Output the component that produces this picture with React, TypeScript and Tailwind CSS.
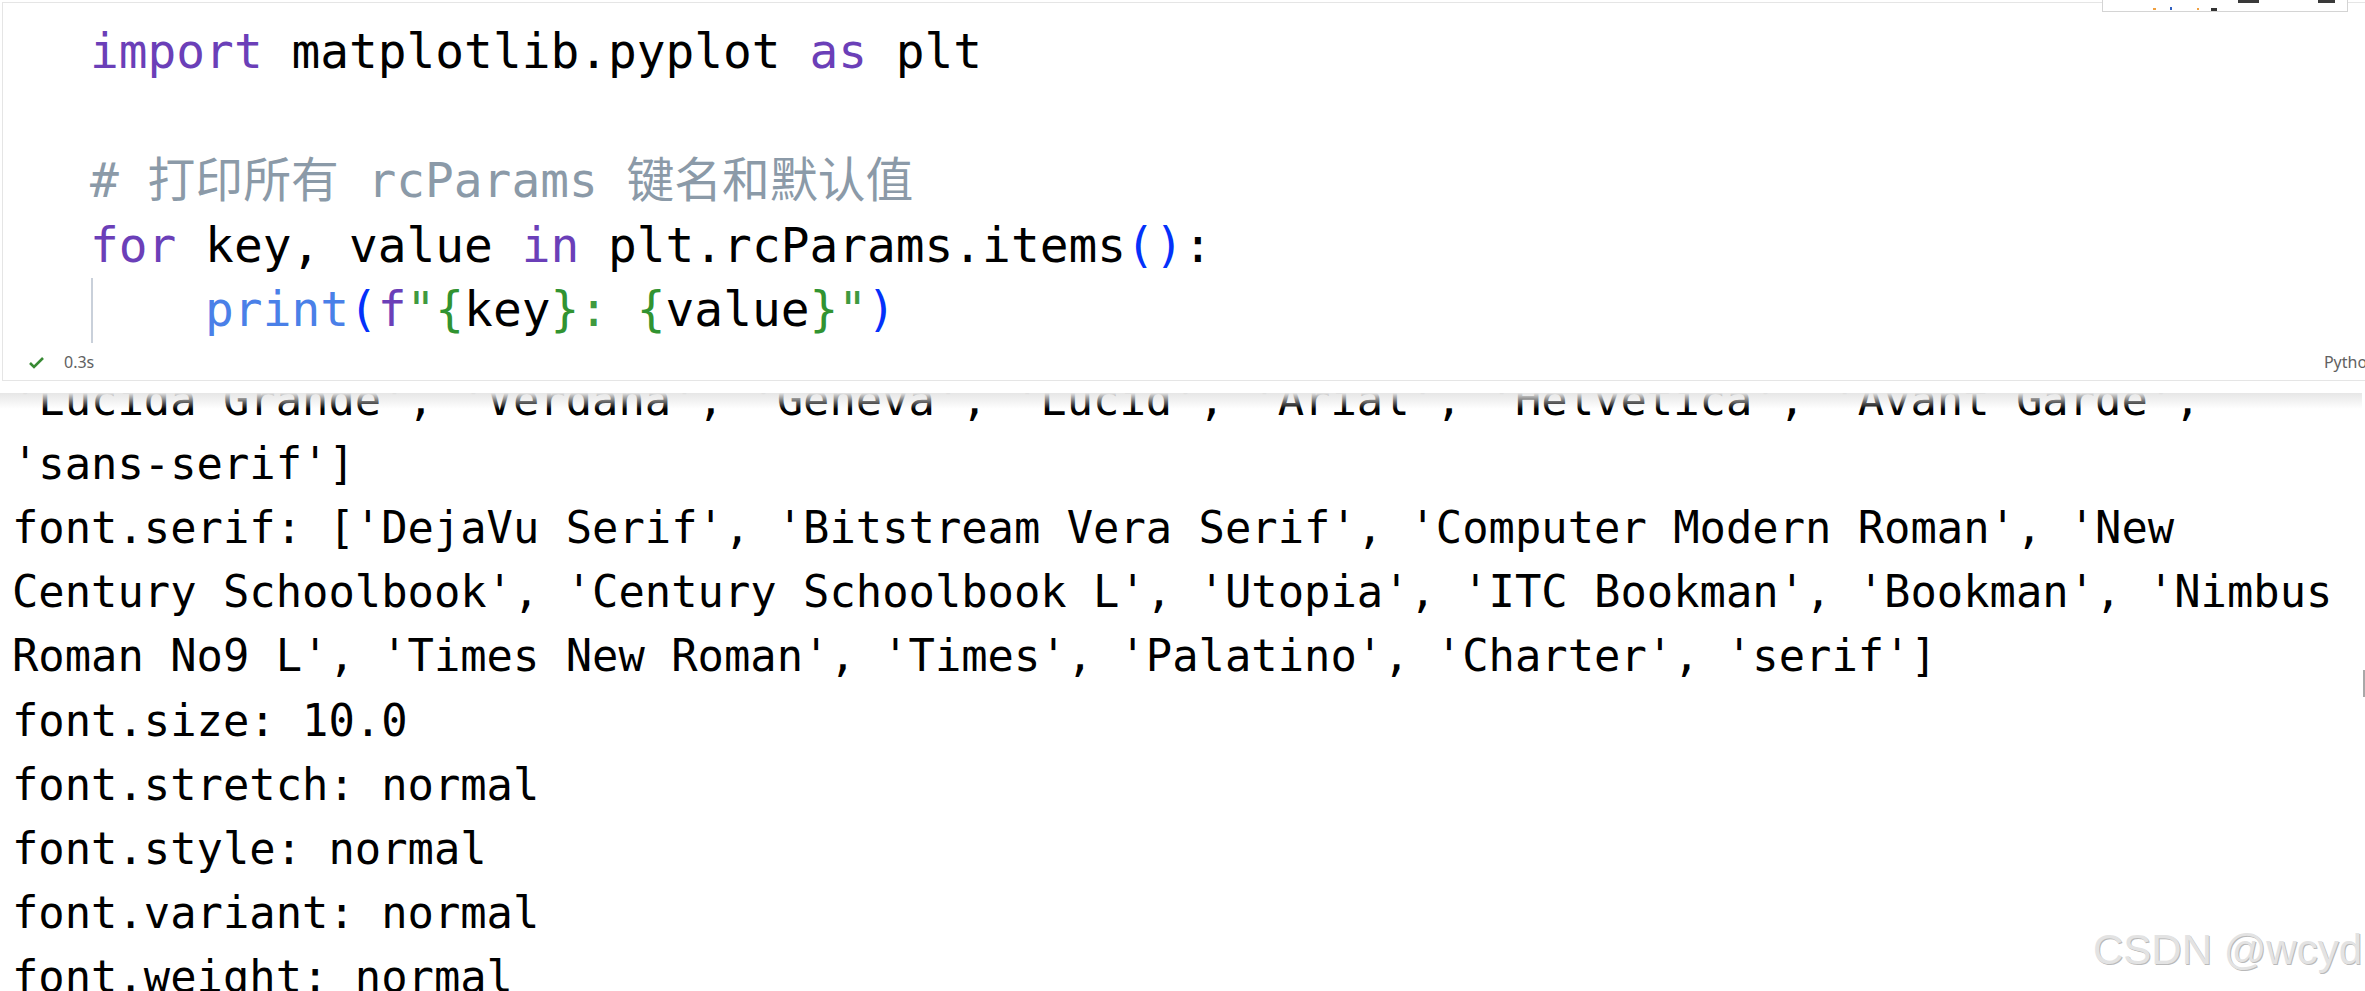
import React from "react";

const K = ({ children }: { children: React.ReactNode }) => (
  <span className="text-[#6b3fb8]">{children}</span>
);
const P = ({ children }: { children: React.ReactNode }) => (
  <span className="text-[#0431fa]">{children}</span>
);
const B = ({ children }: { children: React.ReactNode }) => (
  <span className="text-[#319331]">{children}</span>
);
const S = ({ children }: { children: React.ReactNode }) => (
  <span className="text-[#3f9a3f]">{children}</span>
);
const F = ({ children }: { children: React.ReactNode }) => (
  <span className="text-[#4a80e8]">{children}</span>
);

const outputLines = [
  "'Lucida Grande', 'Verdana', 'Geneva', 'Lucid', 'Arial', 'Helvetica', 'Avant Garde',",
  "'sans-serif']",
  "font.serif: ['DejaVu Serif', 'Bitstream Vera Serif', 'Computer Modern Roman', 'New",
  "Century Schoolbook', 'Century Schoolbook L', 'Utopia', 'ITC Bookman', 'Bookman', 'Nimbus",
  "Roman No9 L', 'Times New Roman', 'Times', 'Palatino', 'Charter', 'serif']",
  "font.size: 10.0",
  "font.stretch: normal",
  "font.style: normal",
  "font.variant: normal",
  "font.weight: normal",
];

export default function App() {
  return (
    <div className="relative w-[2365px] h-[991px] overflow-hidden bg-white">
      {/* Code cell */}
      <div className="flex flex-col ml-[2px] mt-[2px] h-[379px] border-t border-l border-b border-[#e5e5e5]">
        <div className="pt-[17px] pl-[87px] font-['DejaVu_Sans_Mono','Noto_Sans_CJK_SC',monospace] text-[47.8px] leading-[64.6px] text-black whitespace-pre">
          <div>
            <K>import</K> matplotlib.pyplot <K>as</K> plt
          </div>
          <div>{" "}</div>
          <div className="text-[#8b9aa8]"># 打印所有 rcParams 键名和默认值</div>
          <div>
            <K>for</K> key, value <K>in</K> plt.rcParams.items<P>()</P>:
          </div>
          <div className="flex">
            <span className="ml-[1px] w-[2px] bg-[#c9d0da]" />
            <span className="pl-[112.1px]">
              <F>print</F>
              <P>(</P>
              <K>f</K>
              <S>"</S>
              <B>{"{"}</B>key<B>{"}"}</B>
              <S>: </S>
              <B>{"{"}</B>value<B>{"}"}</B>
              <S>"</S>
              <P>)</P>
            </span>
          </div>
        </div>
        {/* footer */}
        <div className="mt-auto mb-[6px] flex items-center h-[24px] font-['Noto_Sans',sans-serif] text-[16px] text-[#616161]">
          <svg className="ml-[25px]" width="17" height="13" viewBox="0 0 17 13">
            <polyline points="2,7 6,11 15,2" fill="none" stroke="#388a34" strokeWidth="2.6" />
          </svg>
          <span className="ml-[19px]">0.3s</span>
          <span className="ml-auto mr-[-12px]">Python</span>
        </div>
      </div>

      {/* toolbar box overlapping top */}
      <div className="absolute left-[2102px] top-[-20px] w-[246px] h-[32px] bg-white border border-[#d4d4d4]">
        <span className="absolute left-[50px] bottom-[1px] w-[3px] h-[2px] bg-[#f0a040]" />
        <span className="absolute left-[67px] bottom-[1px] w-[2px] h-[3px] bg-[#3060c0]" />
        <span className="absolute left-[94px] bottom-[1px] w-[2px] h-[2px] bg-[#f0a040]" />
        <span className="absolute left-[108px] bottom-[0px] w-[6px] h-[3px] bg-[#333]" />
        <span className="absolute left-[135px] bottom-[8px] w-[21px] h-[3px] bg-[#3a3a3a]" />
        <span className="absolute left-[215px] bottom-[8px] w-[17px] h-[3px] bg-[#3a3a3a]" />
      </div>

      {/* output */}
      <div className="relative mt-[12px] h-[598px] overflow-hidden">
        <div className="absolute left-0 top-0 w-[2362px] h-[16px] bg-gradient-to-b from-[#e6e6e6] to-transparent z-10" />
        <div className="-mt-[25.5px] pl-[12px] font-['DejaVu_Sans_Mono',monospace] text-[43.8px] leading-[64.2px] text-black whitespace-pre">
          {outputLines.map((l, i) => (
            <div key={i}>{l}</div>
          ))}
        </div>
        <div className="absolute right-0 top-[277px] w-[2px] h-[27px] bg-[#a8a8a8]" />
      </div>

      {/* watermark */}
      <span className="absolute left-[2093px] top-[929px] font-['Liberation_Sans',Arial,sans-serif] text-[42px] leading-none text-[#e3e3e3] [text-shadow:1px_1px_0_#b9b9b9] whitespace-nowrap">
        CSDN @wcyd
      </span>
    </div>
  );
}
